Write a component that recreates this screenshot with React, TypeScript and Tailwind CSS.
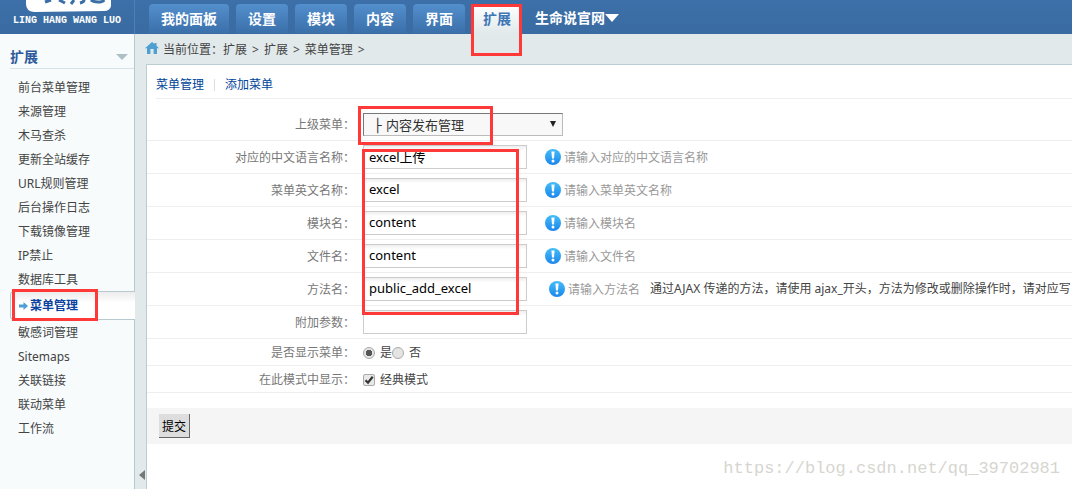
import { useState } from 'react';
import type { ReactNode } from 'react';

const tabs = ['我的面板', '设置', '模块', '内容', '界面'];

const menuBefore = [
  '前台菜单管理',
  '来源管理',
  '木马查杀',
  '更新全站缓存',
  'URL规则管理',
  '后台操作日志',
  '下载镜像管理',
  'IP禁止',
  '数据库工具',
];

const menuAfter = ['敏感词管理', 'Sitemaps', '关联链接', '联动菜单', '工作流'];

function Highlight({ className }: { className: string }) {
  return (
    <div
      aria-hidden="true"
      className={`pointer-events-none absolute z-10 border-3 border-[#ff3838] ${className}`}
    />
  );
}

function Logo() {
  return (
    <div className="flex h-[34px] w-[135px] shrink-0 flex-col items-center border-r border-[#4f7fb4]">
      <svg width="86" height="13" viewBox="0 0 86 13" className="ml-1 block shrink-0" aria-hidden="true">
        <path d="M0 0H85V6Q84 11 78 11L8 12Q0 11 0 4Z" fill="#fff" />
        <g fill="none" stroke="#3a6ea5" strokeWidth="3">
          <path d="M25 0 19 2" />
          <path d="M33 0 39 3" />
          <path d="M48 0 45 4" />
          <path d="M58 0Q58 2 54 3" />
          <path d="M65 0Q67 2 72 2Q77 2 78 0" />
        </g>
      </svg>
      <span className="font-['Liberation_Mono',monospace] text-[10px] leading-4 font-bold whitespace-nowrap text-white">
        LING HANG WANG LUO
      </span>
    </div>
  );
}

function Header() {
  return (
    <header className="flex h-[34px] bg-linear-to-b from-[#3d70a8] to-[#3a6ba3]">
      <Logo />
      <nav className="flex items-start gap-[7px] pt-1 pl-[14px] text-sm font-bold text-white">
        {tabs.map((tab) => (
          <a
            key={tab}
            href="#"
            className="flex h-[29px] items-center rounded-t-sm bg-linear-to-b from-[#538fcd] to-[#3b70aa] px-3 whitespace-nowrap"
          >
            {tab}
          </a>
        ))}
        <div className="relative">
          <a
            href="#"
            aria-current="page"
            className="flex h-[30px] items-center rounded-t-sm bg-linear-to-b from-white to-[#e1e9eb] px-[11px] whitespace-nowrap text-[#3f77b5]"
          >
            扩展
          </a>
          <Highlight className="top-0 -left-px h-[52px] w-[51px]" />
        </div>
        <a href="#" className="flex h-[27px] items-center pl-[6px] whitespace-nowrap">
          生命说官网
          <svg width="14" height="8" viewBox="0 0 14 8" aria-hidden="true">
            <path d="M0 0H14L7 8Z" fill="#fff" />
          </svg>
        </a>
      </nav>
    </header>
  );
}

function MenuItem({ label }: { label: string }) {
  return (
    <li>
      <a href="#" className="block h-6 pl-[18px] leading-[26px] whitespace-nowrap">
        {label}
      </a>
    </li>
  );
}

function Sidebar() {
  return (
    <aside className="w-[135px] shrink-0 border-r border-[#b9c9d0] bg-[#f7fbfc] text-[#444]">
      <div className="ml-[10px] flex h-[35px] items-center justify-between border-b border-[#d5e2e8] pt-[11px] pr-[6px]">
        <h2 className="text-sm font-bold text-[#2d5a9b]">扩展</h2>
        <svg width="12" height="6" viewBox="0 0 12 6" aria-hidden="true">
          <path d="M0 0H12L6 6Z" fill="#afc0c5" />
        </svg>
      </div>
      <ul className="pt-[6px]">
        {menuBefore.map((label) => (
          <MenuItem key={label} label={label} />
        ))}
        <li className="relative">
          <a
            href="#"
            aria-current="page"
            className="-mr-px ml-[10px] flex h-[29px] items-center gap-[2px] rounded-l-sm border border-r-0 border-[#b9c9d0] bg-linear-to-b from-[#ececec] via-white via-40% to-white pl-2 font-bold text-[#0a42a0]"
          >
            <svg width="9" height="8" viewBox="0 0 9 8" aria-hidden="true">
              <path d="M0 2.5H4.5V0L9 4L4.5 8V5.5H0Z" fill="#4f9fd2" />
            </svg>
            菜单管理
          </a>
          <Highlight className="-top-[2px] left-3 h-8 w-[86px]" />
        </li>
        {menuAfter.map((label) => (
          <MenuItem key={label} label={label} />
        ))}
      </ul>
    </aside>
  );
}

function Breadcrumb() {
  return (
    <div className="flex h-[30px] items-center gap-[5px] pt-px pl-[10px] whitespace-nowrap text-[#444]">
      <svg width="14" height="12" viewBox="0 0 14 12" className="-mr-1 mb-[3px]" aria-hidden="true">
        <path d="M7 0 9.5 2.1V1H11.5V3.8L14 6.3H12V12H8.6V7H5.4V12H2V6.3H0Z" fill="#4f9fd2" />
      </svg>
      <span className="pl-[3px]">当前位置：扩展</span>
      <span>&gt;</span>
      <span>扩展</span>
      <span>&gt;</span>
      <span>菜单管理</span>
      <span>&gt;</span>
    </div>
  );
}

function Hint({ children }: { children: ReactNode }) {
  return (
    <span className="flex items-center gap-[3px] whitespace-nowrap text-[#999]">
      <svg width="16" height="16" viewBox="0 0 16 16" aria-hidden="true">
        <defs>
          <linearGradient id="hint" x1="0" y1="0" x2="0" y2="1">
            <stop offset="0" stopColor="#45bdf8" />
            <stop offset="1" stopColor="#1a86ec" />
          </linearGradient>
        </defs>
        <circle cx="8" cy="8" r="8" fill="url(#hint)" />
        <path d="M6.4 2.6H9.6L9 9.6H7Z" fill="#fff" />
        <circle cx="8" cy="12" r="1.5" fill="#fff" />
      </svg>
      <span className="pt-[2px]">{children}</span>
    </span>
  );
}

function Row({ label, htmlFor, children }: { label: string; htmlFor: string; children: ReactNode }) {
  return (
    <div className="flex h-[33px] items-center border-b border-[#eee]">
      <label htmlFor={htmlFor} className="w-[208px] shrink-0 pt-[2px] text-right text-[#777]">
        {label}：
      </label>
      <div className="flex items-center pl-2 whitespace-nowrap">{children}</div>
    </div>
  );
}

const fields = [
  { id: 'language', label: '对应的中文语言名称', value: 'excel上传', hint: '请输入对应的中文语言名称' },
  { id: 'name', label: '菜单英文名称', value: 'excel', hint: '请输入菜单英文名称' },
  { id: 'module', label: '模块名', value: 'content', hint: '请输入模块名' },
  { id: 'file', label: '文件名', value: 'content', hint: '请输入文件名' },
  {
    id: 'method',
    label: '方法名',
    value: 'public_add_excel',
    hint: '请输入方法名',
    note: '通过AJAX 传递的方法，请使用 ajax_开头，方法为修改或删除操作时，请对应写',
  },
  { id: 'data', label: '附加参数', value: '' },
];

function MenuForm() {
  const [visible, setVisible] = useState('yes');
  return (
    <form onSubmit={(e) => e.preventDefault()}>
      <div className="pt-[9px]">
        <Row label="上级菜单" htmlFor="parent">
          <div className="relative">
            <select
              id="parent"
              className="block h-[23px] w-[200px] appearance-none border border-t-[#777] border-r-[#bbb] border-b-[#bbb] border-l-[#777] bg-[#f8f8f8] pt-[2px] pl-[10px] font-['DejaVu_Sans','Noto_Sans_CJK_SC',sans-serif] text-[13px] leading-5 text-[#333]"
            >
              <option>├ 内容发布管理</option>
            </select>
            <svg
              width="6"
              height="6"
              viewBox="0 0 6 6"
              className="pointer-events-none absolute top-2 right-[7px]"
              aria-hidden="true"
            >
              <path d="M0 0H6L3 6Z" fill="#222" />
            </svg>
            <Highlight className="-top-[7px] -left-[5px] h-[39px] w-[135px]" />
          </div>
        </Row>
        <div className="relative">
          {fields.map((f) => (
            <Row key={f.id} label={f.label} htmlFor={f.id}>
              <input
                id={f.id}
                type="text"
                defaultValue={f.value}
                className="h-6 w-[164px] border border-[#ccc] bg-linear-to-b from-[#eee] via-white via-20% to-white px-[5px] pb-[2px] text-[13px] leading-4 text-black"
              />
              {f.hint && (
                <span className={f.note ? 'pl-[22px]' : 'pl-[18px]'}>
                  <Hint>{f.hint}</Hint>
                </span>
              )}
              {f.note && <span className="pl-[10px] text-[#444]">{f.note}</span>}
            </Row>
          ))}
          <Highlight className="top-2 left-[215px] h-[166px] w-[157px]" />
        </div>
        <fieldset className="flex h-[27px] items-center border-b border-[#eee] text-[#444]">
          <span className="w-[208px] shrink-0 pt-[2px] text-right text-[#777]">是否显示菜单：</span>
          <div className="flex items-center pt-[2px] pl-2 whitespace-nowrap">
            {[
              ['yes', '是'],
              ['no', '否'],
            ].map(([value, text]) => (
              <label key={value} className="flex items-center gap-[5px]">
                <input
                  type="radio"
                  name="display"
                  value={value}
                  checked={visible === value}
                  onChange={() => setVisible(value)}
                  className="size-3 appearance-none rounded-full border border-[#aaa] bg-[#e4e4e4] checked:bg-[radial-gradient(circle,#555_0_3px,#e4e4e4_3px)]"
                />
                {text}
              </label>
            ))}
          </div>
        </fieldset>
        <div className="flex h-[27px] items-center border-b border-[#eee] text-[#444]">
          <span className="w-[208px] shrink-0 pt-[2px] text-right text-[#777]">在此模式中显示：</span>
          <label className="flex items-center gap-[5px] pt-[2px] pl-2 whitespace-nowrap">
            <span className="relative block size-3">
              <input
                type="checkbox"
                defaultChecked
                className="peer block size-3 appearance-none rounded-xs border border-[#aaa] bg-[#e8e8e8]"
              />
              <svg
                viewBox="0 0 12 12"
                className="pointer-events-none absolute inset-0 hidden size-3 peer-checked:block"
                aria-hidden="true"
              >
                <path d="M2.5 6.2 5 8.7 9.7 2.8" fill="none" stroke="#333" strokeWidth="2.2" />
              </svg>
            </span>
            经典模式
          </label>
        </div>
      </div>
      <div className="mt-[15px] flex h-9 items-center bg-[#f5f5f5] pl-3">
        <button
          type="submit"
          className="h-6 border-r border-b border-[#666] bg-[#ddd] px-[3px] pt-[2px] text-black"
        >
          提交
        </button>
      </div>
    </form>
  );
}

export default function App() {
  return (
    <div className="flex min-h-screen flex-col overflow-hidden bg-white font-['Noto_Sans','Noto_Sans_CJK_SC',sans-serif] text-xs">
      <Header />
      <div className="flex flex-1">
        <Sidebar />
        <div className="flex min-w-0 flex-1 flex-col bg-[#e1e9eb]">
          <Breadcrumb />
          <div className="flex min-h-0 flex-1">
            <button type="button" aria-label="收起菜单" className="flex w-[11px] items-end justify-end pr-px pb-[9px]">
              <svg width="6" height="10" viewBox="0 0 6 10" aria-hidden="true">
                <path d="M6 0V10L0 5Z" fill="#777" />
              </svg>
            </button>
            <main className="relative min-w-0 flex-1 overflow-hidden border-t border-l border-[#b9cdd2] bg-white">
              <nav className="ml-[9px] flex h-[34px] items-center border-b border-[#eee] pt-[6px] text-[#004499]">
                <a href="#">菜单管理</a>
                <span className="mx-[10px] h-3 w-px bg-[#ddd]" />
                <a href="#">添加菜单</a>
              </nav>
              <MenuForm />
              <div className="pointer-events-none absolute right-3 bottom-2 font-['Liberation_Mono',monospace] text-[17px] leading-6 text-[#d6d6d0]">
                https://blog.csdn.net/qq_39702981
              </div>
            </main>
          </div>
        </div>
      </div>
    </div>
  );
}
